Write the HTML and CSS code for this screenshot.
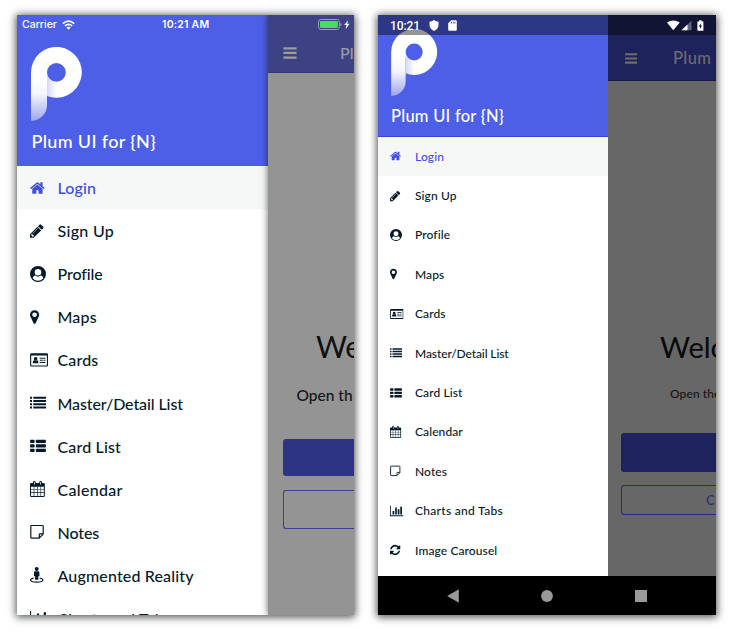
FILE: index.html
```html
<!DOCTYPE html>
<html lang="en">
<head>
<meta charset="utf-8">
<title>Plum UI for {N}</title>
<link rel="stylesheet" href="styles.css">
</head>
<body>
<svg class="defs" aria-hidden="true">
  <defs>
    <linearGradient id="stem" x1="0" y1="0" x2="0" y2="1">
      <stop offset="0" stop-color="#fff"/>
      <stop offset=".35" stop-color="#fff" stop-opacity=".94"/>
      <stop offset="1" stop-color="#fff" stop-opacity=".45"/>
    </linearGradient>
    <linearGradient id="fold" x1="0" y1="0" x2="1" y2="0">
      <stop offset="0" stop-color="#4d5fe6" stop-opacity=".25"/>
      <stop offset="1" stop-color="#4d5fe6" stop-opacity="0"/>
    </linearGradient>
  </defs>
  <symbol id="logo" viewBox="0 0 51 74">
    <path fill="url(#stem)" d="M0 32H16V58A16 15.8 0 0 1 .6 73.8H0z"/>
    <path fill="#fff" fill-rule="evenodd" d="M0 32V25.4A25.4 25.4 0 1 1 16 48.9V32zM25.400 16a9.400 9.400 0 1 0 0 18.800a9.400 9.400 0 0 0 0-18.800z"/>
    <path fill="url(#fold)" d="M16 28q2.500 6 9.400 6.800V50.600Q20 50.600 16 48.900z"/>
  </symbol>
  <symbol id="home" viewBox="64 0 1792 1792"><path d="M1472 992v480q0 26-19 45t-45 19h-384v-384h-256v384h-384q-26 0-45-19t-19-45v-480q0-1 .5-3t.5-3l575-474 575 474q1 2 1 6zm223-69l-62 74q-8 9-21 11h-3q-13 0-21-7l-692-577-692 577q-12 8-24 7-13-2-21-11l-62-74q-8-10-7-23.500t11-21.500l719-599q32-26 76-26t76 26l244 204v-195q0-14 9-23t23-9h192q14 0 23 9t9 23v408l219 182q10 8 11 21.500t-7 23.500z"/></symbol>
  <symbol id="pencil" viewBox="128 0 1792 1792"><path d="M491 1536l91-91-235-235-91 91v107h128v128h107zm523-928q0-22-22-22-10 0-17 7l-542 542q-7 7-7 17 0 22 22 22 10 0 17-7l542-542q7-7 7-17zm-54-192l416 416-832 832h-416v-416zm683 96q0 53-37 90l-166 166-416-416 166-165q36-38 90-38 53 0 91 38l235 234q37 39 37 91z"/></symbol>
  <symbol id="user" viewBox="0 0 16 16"><path fill-rule="evenodd" d="M8 0a8 8 0 1 0 0 16A8 8 0 0 0 8 0zM8 2.900a3.300 3.300 0 0 1 0 6.600a3.300 3.300 0 0 1 0-6.600zM2.700 12.300C3.100 10.700 4.100 9.700 5.300 9.600Q8 11.700 10.700 9.600C11.900 9.700 12.900 10.700 13.300 12.300A6.850 6.850 0 0 1 2.700 12.300z"/></symbol>
  <symbol id="marker" viewBox="384 0 1792 1792"><path d="M1152 640q0-106-75-181t-181-75-181 75-75 181 75 181 181 75 181-75 75-181zm256 0q0 109-33 179l-364 774q-16 33-47.500 52t-67.500 19-67.500-19-46.500-52l-365-774q-33-70-33-179 0-212 150-362t362-150 362 150 150 362z"/></symbol>
  <symbol id="card" viewBox="0 0 18 16"><path fill-rule="evenodd" d="M1.400 1.200h15.300a1.300 1.300 0 0 1 1.300 1.300v10.700a1.300 1.300 0 0 1-1.300 1.300H1.400A1.300 1.300 0 0 1 .1 13.200V2.500a1.300 1.300 0 0 1 1.300-1.300zM1.200 3.500v9.600q0 .3.300.3h15.100q.3 0 .3-.3V3.500z"/><circle cx="5.600" cy="6.700" r="1.800"/><path d="M2.700 11.200q0-3 1.500-3.200q1.400 1 2.800 0q1.500.2 1.500 3.200zM9.700 5.700h5.700v1H9.700zM9.700 7.800h3v1h-3zM13.500 7.800h1.900v1h-1.900zM9.700 10h5.700v1H9.700z"/></symbol>
  <symbol id="list" viewBox="0 0 16 16"><path d="M0 1.700h2v2H0zM0 5h2v2H0zM0 8.300h2v2H0zM0 11.600h2v2H0zM3.300 1.700H16v2H3.300zM3.300 5H16v2H3.300zM3.300 8.300H16v2H3.300zM3.300 11.600H16v2H3.300z"/></symbol>
  <symbol id="thlist" viewBox="0 0 16 16"><path d="M.8 1.700h3.100q.7 0 .7.700v1.800q0 .7-.7.700H.8q-.7 0-.7-.7V2.400q0-.7.700-.7zM6.500 1.700h8.700q.7 0 .7.700v1.800q0 .7-.7.700H6.500q-.7 0-.7-.7V2.400q0-.7.700-.7zM.8 6.200h3.100q.7 0 .7.700v1.800q0 .7-.7.700H.8q-.7 0-.7-.7V6.900q0-.7.700-.7zM6.500 6.200h8.700q.7 0 .7.700v1.800q0 .7-.7.700H6.500q-.7 0-.7-.7V6.900q0-.7.700-.7zM.8 10.700h3.100q.7 0 .7.700v1.800q0 .7-.7.700H.8q-.7 0-.7-.7v-1.800q0-.7.700-.7zM6.500 10.700h8.700q.7 0 .7.700v1.800q0 .7-.7.700H6.500q-.7 0-.7-.7v-1.800q0-.7.700-.7z"/></symbol>
  <symbol id="calendar" viewBox="0 0 16 16"><path fill-rule="evenodd" d="M1.200 2h1.700V1.300Q2.900 0 4.300 0t1.400 1.300V2h3.500V1.300Q9.200 0 10.600 0T12 1.300V2h1.700q1.100 0 1.100 1.100v11.700q0 1.200-1.100 1.200H1.200Q0 16 0 14.800V3.100Q0 2 1.200 2zM1 5.700v2.500h2.700V5.700zM4.300 5.700v2.500h2.800V5.700zM7.700 5.700v2.500h2.800V5.700zM11.100 5.700v2.500h2.700V5.700zM1 8.800v2.500h2.700V8.800zM4.300 8.800v2.500h2.800V8.800zM7.700 8.800v2.500h2.800V8.800zM11.100 8.800v2.500h2.700V8.800zM1 11.900v3.100h2.700v-3.100zM4.300 11.900v3.100h2.800v-3.100zM7.700 11.900v3.100h2.800v-3.100zM11.100 11.900v3.100h2.700v-3.100zM4 1v2.500h.7V1zM10.300 1v2.500h.7V1z"/></symbol>
  <symbol id="note" viewBox="0 0 16 16"><path fill="none" stroke="currentColor" stroke-width="1.200" stroke-linejoin="round" d="M1.500 1.500h11q.7 0 .7.700v7.900l-4 4H1.500q-.7 0-.7-.7V2.200q0-.7.700-.7zM13.200 9.900H10q-.7 0-.7.700v3.500"/></symbol>
  <symbol id="street" viewBox="0 0 16 16"><circle cx="6.700" cy="2" r="2"/><path d="M5.200 4.300h3q1.200 0 1.200 1.200v3.700H8.300v3.500H5.100V9.200H4V5.500q0-1.200 1.200-1.200z"/><path fill="none" stroke="currentColor" stroke-width="1.150" d="M3.700 11.100C1.700 11.500.6 12.100.6 12.900c0 1.300 2.600 2.200 6.100 2.200s6.100-.9 6.100-2.200c0-.8-1.100-1.400-3.100-1.800"/></symbol>
  <symbol id="chart" viewBox="0 0 18 16"><path d="M0 1.100h1.100v12.600H18v1.200H0zM3.400 8h2.300v4.600H3.400zM6.900 3.400h2.200v9.200H6.900zM10.300 5.700h2.300v6.900h-2.300zM13.700 2.300H16v10.300h-2.300z"/></symbol>
  <symbol id="refresh" viewBox="128 0 1792 1792"><path d="M1639 1056q0 5-1 7-64 268-268 434.500t-478 166.500q-146 0-282.500-55t-243.500-157l-129 129q-19 19-45 19t-45-19-19-45v-448q0-26 19-45t45-19h448q26 0 45 19t19 45-19 45l-137 137q71 66 161 102t187 36q134 0 250-65t186-179q11-17 53-117 8-23 30-23h192q13 0 22.500 9.500t9.500 22.500zm25-800v448q0 26-19 45t-45 19h-448q-26 0-45-19t-19-45 19-45l138-138q-148-137-349-137-134 0-250 65t-186 179q-11 17-53 117-8 23-30 23h-199q-13 0-22.500-9.500t-9.500-22.500v-7q65-268 270-434.500t480-166.500q146 0 284 55.500t245 156.500l130-129q19-19 45-19t45 19 19 45z"/></symbol>
  <symbol id="bars" viewBox="0 0 12 11"><path d="M0 .2h12v2.100H0zM0 4.400h12v2.100H0zM0 8.600h12v2.100H0z"/></symbol>
</svg>

<main class="stage">
  <section class="phone ios">
    <div class="screen">
      <nav class="drawer">
        <header class="brand">
          <svg class="logo"><use href="#logo"/></svg>
          <h1 class="brand-name">Plum UI for {N}</h1>
        </header>
        <ul class="menu">
          <li class="item active"><svg class="icon"><use href="#home"/></svg><span>Login</span></li>
          <li class="item"><svg class="icon"><use href="#pencil"/></svg><span class="loose">Sign Up</span></li>
          <li class="item"><svg class="icon"><use href="#user"/></svg><span class="tight">Profile</span></li>
          <li class="item"><svg class="icon"><use href="#marker"/></svg><span>Maps</span></li>
          <li class="item"><svg class="icon wide"><use href="#card"/></svg><span>Cards</span></li>
          <li class="item"><svg class="icon"><use href="#list"/></svg><span class="tight">Master/Detail List</span></li>
          <li class="item"><svg class="icon"><use href="#thlist"/></svg><span>Card List</span></li>
          <li class="item"><svg class="icon"><use href="#calendar"/></svg><span class="loose">Calendar</span></li>
          <li class="item"><svg class="icon"><use href="#note"/></svg><span class="tight">Notes</span></li>
          <li class="item"><svg class="icon"><use href="#street"/></svg><span>Augmented Reality</span></li>
          <li class="item"><svg class="icon wide"><use href="#chart"/></svg><span>Charts and Tabs</span></li>
        </ul>
      </nav>
      <div class="page">
        <header class="bar"><svg class="burger"><use href="#bars"/></svg><span>Pl</span></header>
        <h2 class="welcome">We</h2>
        <p class="hint">Open th</p>
        <div class="button solid"></div>
        <div class="button outline"></div>
      </div>
    </div>
    <div class="status">
      <span class="carrier">Carrier</span>
      <svg class="wifi" viewBox="0 0 13 10"><g fill="none" stroke="#fff" stroke-width="1.700"><path d="M.8 3.600Q6.500-1.400 12.200 3.600"/><path d="M2.900 5.900Q6.500 2.900 10.100 5.900"/></g><path fill="#fff" d="M4.400 7.500Q6.500 5.800 8.600 7.500L6.500 9.700z"/></svg>
      <span class="time">10:21 AM</span>
      <svg class="battery" viewBox="0 0 32 11"><rect x=".5" y=".5" width="20.800" height="10" rx="2.600" fill="none" stroke="#9b9fbe"/><rect x="2" y="2" width="17.800" height="7" rx="1.200" fill="#4cd964"/><path fill="#9b9fbe" d="M22.300 3.700q1.300.4 1.300 1.800t-1.300 1.800z"/><path fill="#fff" d="M30 1.200L26.200 6h2.200l-.8 4.200 3.900-5.400h-2.300z"/></svg>
    </div>
  </section>

  <section class="phone android">
    <div class="screen">
      <nav class="drawer">
        <header class="brand">
          <svg class="logo"><use href="#logo"/></svg>
          <h1 class="brand-name">Plum UI for {N}</h1>
        </header>
        <ul class="menu">
          <li class="item active"><svg class="icon"><use href="#home"/></svg><span>Login</span></li>
          <li class="item"><svg class="icon"><use href="#pencil"/></svg><span>Sign Up</span></li>
          <li class="item"><svg class="icon"><use href="#user"/></svg><span>Profile</span></li>
          <li class="item"><svg class="icon"><use href="#marker"/></svg><span>Maps</span></li>
          <li class="item"><svg class="icon wide"><use href="#card"/></svg><span>Cards</span></li>
          <li class="item"><svg class="icon"><use href="#list"/></svg><span class="tight">Master/Detail List</span></li>
          <li class="item"><svg class="icon"><use href="#thlist"/></svg><span>Card List</span></li>
          <li class="item"><svg class="icon"><use href="#calendar"/></svg><span>Calendar</span></li>
          <li class="item"><svg class="icon"><use href="#note"/></svg><span>Notes</span></li>
          <li class="item"><svg class="icon wide"><use href="#chart"/></svg><span class="loose">Charts and Tabs</span></li>
          <li class="item"><svg class="icon"><use href="#refresh"/></svg><span>Image Carousel</span></li>
        </ul>
      </nav>
      <div class="page">
        <header class="bar"><svg class="burger"><use href="#bars"/></svg><span>Plum</span></header>
        <h2 class="welcome">Welc</h2>
        <p class="hint">Open the</p>
        <div class="button solid"></div>
        <div class="button outline">C</div>
      </div>
    </div>
    <footer class="keys">
      <svg viewBox="0 0 12 14"><path d="M11.800.300v13.400L.2 7z"/></svg>
      <svg viewBox="0 0 12 12"><circle cx="6" cy="6" r="5.900"/></svg>
      <svg viewBox="0 0 12 12"><path d="M0 0h12v12H0z"/></svg>
    </footer>
    <div class="status">
      <span class="time">10:21</span>
      <svg class="shield" viewBox="0 0 10 11"><path d="M5 0q2 1.500 4.500 1.700V5Q9.500 9 5 10.900Q.5 9 .5 5V1.700Q3 1.500 5 0z"/></svg>
      <svg class="sd" viewBox="0 0 9 11"><path fill-rule="evenodd" d="M3.200.2h4.600q1 0 1 1v8.600q0 1-1 1H1.200q-1 0-1-1V3.200zM3.200 1.700v1.700h.8V1.700zM4.900 1.700v1.700h.8V1.700zM6.600 1.700v1.700h.8V1.700z"/></svg>
      <svg class="net" viewBox="0 0 38 12"><path d="M0 2.500Q6.300-1.700 12.700 2.500L6.300 10.300z"/><path fill-opacity=".35" d="M24.500.8v9.500H14.500z"/><path d="M20.500 4.600v5.700h-6z"/><path fill-rule="evenodd" d="M32.200.2h2.500v1.200h1.700v9.400h-6V1.400h1.800zM33.700 3.200l-2 3.400h1.300v2.500l2-3.500h-1.300z"/></svg>
    </div>
  </section>
</main>
</body>
</html>
```
FILE: styles.css
```css
* { box-sizing: border-box; }

body {
  margin: 0;
  background: #fff;
  font-family: Lato, "Liberation Sans", sans-serif;
  font-weight: 500;
  color: #041a2a;
}

h1, h2, p, ul { margin: 0; padding: 0; }
svg { display: block; flex: none; overflow: visible; }
.defs { position: absolute; width: 0; height: 0; }

.stage {
  display: flex;
  gap: 24px;
  width: 732px;
  height: 632px;
  padding: 15px 16px 17px 17px;
  overflow: hidden;
}

.phone {
  position: relative;
  display: flex;
  flex-direction: column;
  height: 600px;
  box-shadow: 0 1px 8px 1px rgba(0, 0, 0, .7);
}
.ios { width: 337px; }
.android { width: 338px; }

.screen { display: flex; flex: 1; min-height: 0; overflow: hidden; }

.drawer { flex: none; background: #fff; overflow: hidden; }
.ios .drawer { width: 251px; }
.android .drawer { width: 230px; }

.brand { background: #4d5fe6; color: #fff; }
.ios .brand { height: 151px; padding: 32px 14px 0; }
.android .brand { height: 121.500px; padding: 14px 13px 0; border-bottom: 1px solid #3444d2; }
.ios .logo { width: 51px; height: 74px; }
.android .logo { width: 46.500px; height: 67px; }
.brand-name { font-weight: 500; white-space: nowrap; }
.ios .brand-name { margin: 8px 0 0 .5px; font-size: 18px; line-height: 24px; letter-spacing: .35px; }
.android .brand-name { margin-top: 9px; font-size: 16.500px; line-height: 23px; letter-spacing: .25px; }

.menu { list-style: none; }
.item { display: flex; align-items: center; white-space: nowrap; }
.active { color: #3f4fe0; background: #f6f8f8; }
.icon { fill: currentColor; }
.ios .item { height: 43.100px; padding-left: 13px; font-size: 16px; letter-spacing: .15px; }
.ios .icon { width: 16px; height: 16px; margin-right: 11.500px; }
.ios .wide { width: 18px; margin-right: 9.500px; }
.ios .tight { letter-spacing: -.1px; }
.ios .loose { letter-spacing: .3px; }
.android .item { height: 39.400px; padding-left: 12px; font-size: 12px; letter-spacing: .1px; }
.android .icon { width: 12px; height: 12px; margin-right: 13px; }
.android .wide { width: 13.500px; margin-right: 11.500px; }
.android .tight { letter-spacing: -.1px; }
.android .loose { letter-spacing: .3px; }

.page { flex: 1; min-width: 0; overflow: hidden; white-space: nowrap; }
.ios .page { background: #949494; box-shadow: 0 0 7px rgba(0, 0, 0, .6); }
.android .page { background: #676767; }

.bar { display: flex; align-items: center; }
.burger { fill: currentColor; }
.ios .bar { height: 58px; padding: 18px 0 0 15px; gap: 43px; color: #9c9c9c; background: #3d4284; border-bottom: 1px solid #34387a; font-size: 16px; }
.ios .burger { width: 14px; height: 12px; }
.android .bar { height: 66px; padding: 21px 0 0 17px; gap: 36px; color: #6c6c6c; background: #1f235b; border-bottom: 1px solid #17194b; font-size: 16.500px; letter-spacing: .4px; }
.android .burger { width: 12px; height: 11px; }

.welcome { font-weight: 400; color: #101010; }
.ios .welcome { margin: 253px 0 0 48px; font-size: 30px; line-height: 40px; }
.android .welcome { margin: 246px 0 0 52px; font-size: 29px; line-height: 40px; color: #090909; }
.ios .hint { margin: 19px 0 0 28.500px; font-size: 15.500px; line-height: 20px; color: #151515; }
.android .hint { margin: 17px 0 0 62px; font-size: 12px; line-height: 20px; color: #151515; letter-spacing: .1px; }

.button { border-radius: 3px 0 0 3px; }
.solid { background: #2d3483; }
.ios .solid { height: 37px; margin: 34px 0 0 15px; }
.ios .outline { height: 39px; margin: 14px 0 0 15px; border: 1px solid #3b4290; border-right: 0; }
.android .solid { height: 39px; margin: 29px 0 0 13px; background: #1f235d; }
.android .outline { height: 30px; margin: 13px 0 0 13px; padding-left: 84px; border: 1px solid #292f77; border-right: 0; color: #292f77; font-size: 13px; line-height: 29px; }

.keys { display: flex; align-items: center; flex: none; height: 39px; padding-left: 69px; gap: 82px; background: #000; }
.keys svg { width: 12px; height: 14px; fill: #999; }
.keys svg + svg { height: 12px; }

.status { position: absolute; inset: 0 0 auto; display: flex; align-items: center; color: #fff; fill: #fff; }
.ios .status { height: 19px; padding-left: 5px; font: 500 10.500px Inter, sans-serif; }
.wifi { width: 13px; height: 10px; margin-left: 5px; }
.carrier { width: 35px; }
.ios .time { width: 50px; margin-left: 87px; font-weight: 600; letter-spacing: .2px; white-space: nowrap; }
.battery { width: 32px; height: 11px; margin-left: 106px; }
.android .status { height: 20px; padding: 1px 11px 0 12px; background: rgba(0, 0, 0, .42); font: 500 12px Roboto, sans-serif; }
.android .time { width: 29px; letter-spacing: -.1px; }
.shield { width: 10px; height: 11px; margin-left: 10px; }
.sd { width: 9px; height: 11px; margin-left: 9px; }
.net { width: 38px; height: 12px; margin-left: auto; }
```
